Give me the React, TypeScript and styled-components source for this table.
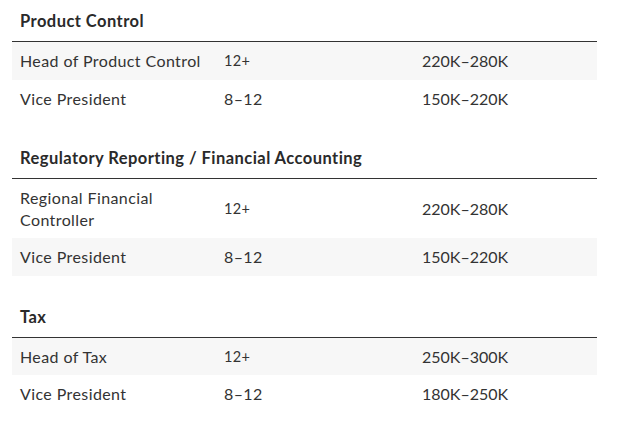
import React from "react";
import styled, { createGlobalStyle } from "styled-components";

const GlobalStyle = createGlobalStyle`
  body {
    margin: 0;
    background: #ffffff;
    font-family: Lato, "Open Sans", sans-serif;
    color: #333333;
  }
`;

const Page = styled.div`
  width: 636px;
  padding: 0 39px 0 12px;
  box-sizing: border-box;
`;

const Section = styled.section`
  margin-bottom: 20px;
`;

const Heading = styled.h3`
  margin: 0;
  height: 42px;
  box-sizing: border-box;
  display: flex;
  align-items: center;
  padding: 1px 8px 0;
  font-size: 16.5px;
  letter-spacing: 0.45px;
  font-weight: 700;
  color: #2a2a2a;
  border-bottom: 1px solid #333333;
`;

const Row = styled.div<{ $shaded: boolean }>`
  display: grid;
  grid-template-columns: 204px 198px 1fr;
  align-items: center;
  background: ${(p) => (p.$shaded ? "#f7f7f7" : "#ffffff")};
`;

const Cell = styled.div<{ $small?: boolean }>`
  padding: 8px;
  font-size: ${(p) => (p.$small ? "14.5px" : "16px")};
  letter-spacing: ${(p) => (p.$small ? "0.4px" : "0.4px")};
  line-height: 21.5px;
  color: #333333;
`;

const Salary = styled(Cell)`
  letter-spacing: 0;
`;

type Job = { title: string; years: string; salary: string };

const sections: { name: string; firstShaded: boolean; jobs: Job[] }[] = [
  {
    name: "Product Control",
    firstShaded: true,
    jobs: [
      { title: "Head of Product Control", years: "12+", salary: "220K–280K" },
      { title: "Vice President", years: "8–12", salary: "150K–220K" },
    ],
  },
  {
    name: "Regulatory Reporting / Financial Accounting",
    firstShaded: false,
    jobs: [
      { title: "Regional Financial Controller", years: "12+", salary: "220K–280K" },
      { title: "Vice President", years: "8–12", salary: "150K–220K" },
    ],
  },
  {
    name: "Tax",
    firstShaded: true,
    jobs: [
      { title: "Head of Tax", years: "12+", salary: "250K–300K" },
      { title: "Vice President", years: "8–12", salary: "180K–250K" },
    ],
  },
];

export default function App() {
  return (
    <>
      <GlobalStyle />
      <Page>
        {sections.map((s) => (
          <Section key={s.name}>
            <Heading>{s.name}</Heading>
            {s.jobs.map((j, i) => (
              <Row key={j.title + i} $shaded={s.firstShaded ? i % 2 === 0 : i % 2 === 1}>
                <Cell>{j.title}</Cell>
                <Cell $small={j.years === "12+"}>{j.years}</Cell>
                <Salary>{j.salary}</Salary>
              </Row>
            ))}
          </Section>
        ))}
      </Page>
    </>
  );
}
